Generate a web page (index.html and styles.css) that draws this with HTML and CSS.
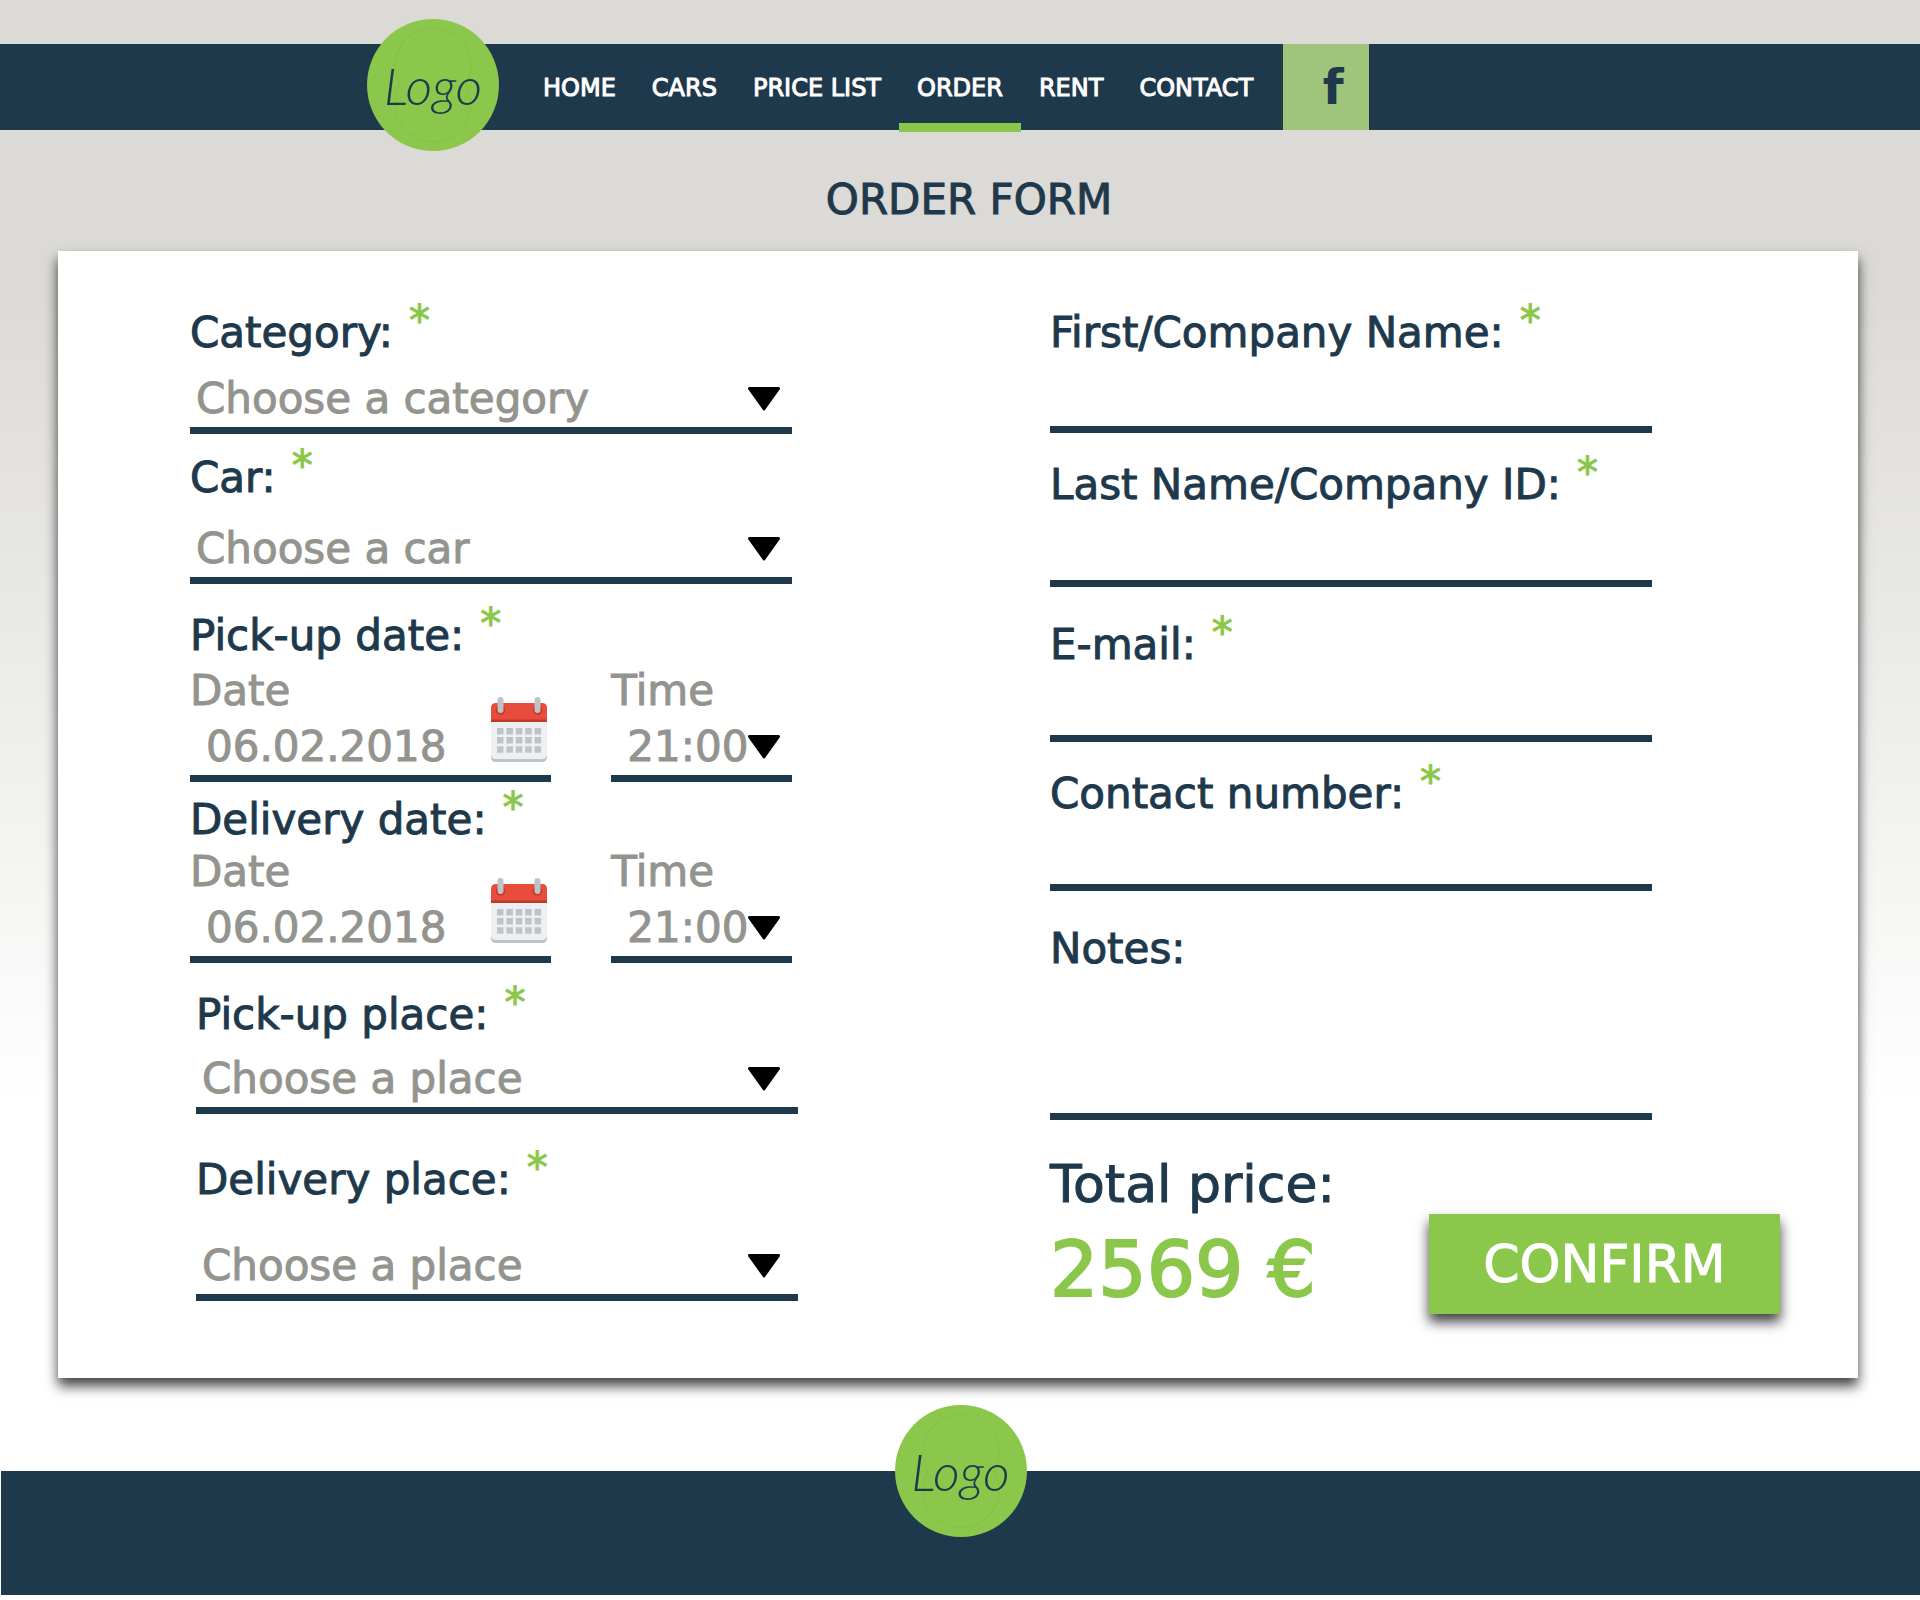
FILE: index.html
```html
<!DOCTYPE html>
<html lang="en">
<head>
<meta charset="utf-8">
<meta name="viewport" content="width=device-width, initial-scale=1">
<title>Order form</title>
<link rel="stylesheet" href="styles.css">
</head>
<body>
<svg class="sprite" aria-hidden="true">
  <symbol id="arrow" viewBox="0 0 32 24"><path d="M1 0H31Q32 0 32 2L17 23Q16 24 15 23L0 2Q0 0 1 0Z"/></symbol>
  <symbol id="calendar" viewBox="0 0 56 65">
    <path fill="#bdc3c7" d="M0 24H56V60Q56 65 51 65H5Q0 65 0 60Z"/>
    <path fill="#ecf0f1" d="M0 24H56V57Q56 62 51 62H5Q0 62 0 57Z"/>
    <path fill="#e74c3c" d="M0 24V11Q0 6 5 6H51Q56 6 56 11V24Z"/>
    <path fill="#c0392b" d="M0 22.500H56V25H0Z"/>
    <circle fill="#c0392b" cx="9.500" cy="13" r="4.700"/>
    <circle fill="#c0392b" cx="46.500" cy="13" r="4.700"/>
    <rect fill="#bdc3c7" x="6.500" y="0" width="6" height="16" rx="3"/>
    <rect fill="#bdc3c7" x="43.500" y="0" width="6" height="16" rx="3"/>
    <path fill="#bdc3c7" d="M6 31h6.500v6.500H6zM15.400 31h6.500v6.500h-6.500zM24.800 31h6.500v6.500h-6.500zM34.200 31h6.500v6.500h-6.500zM43.600 31h6.500v6.500h-6.500zM6 40h6.500v6.500H6zM15.400 40h6.500v6.500h-6.500zM24.800 40h6.500v6.500h-6.500zM34.200 40h6.500v6.500h-6.500zM43.600 40h6.500v6.500h-6.500zM6 49.300h6.500v6.500H6zM15.400 49.300h6.500v6.500h-6.500zM24.800 49.300h6.500v6.500h-6.500zM34.200 49.300h6.500v6.500h-6.500zM43.600 49.300h6.500v6.500h-6.500z"/>
  </symbol>
  <symbol id="badge" viewBox="0 0 132 132">
    <circle cx="66" cy="66" r="66" fill="#8bc74a"/>
    <g fill="#85c04a"><circle cx="66" cy="47" r="38.500"/><circle cx="66" cy="85" r="38.500"/></g>
    <g fill="#8bc74a"><circle cx="66" cy="47" r="37.500"/><circle cx="66" cy="85" r="37.500"/></g>
  </symbol>
</svg>

<header class="bar">
  <a class="logo" href="#"><svg class="logo-badge" aria-hidden="true"><use href="#badge"/></svg><span class="logo-text">Logo</span></a>
  <nav>
    <ul class="menu">
      <li><a href="#">HOME</a></li>
      <li><a href="#">CARS</a></li>
      <li><a href="#">PRICE LIST</a></li>
      <li class="current"><a href="#" aria-current="page">ORDER</a></li>
      <li><a href="#">RENT</a></li>
      <li><a href="#">CONTACT</a></li>
    </ul>
  </nav>
  <a class="facebook" href="#">f</a>
</header>

<main>
  <h1>ORDER FORM</h1>
  <form class="card">
    <div class="column booking">
      <div class="field">
        <label for="category">Category:<span class="star">*</span></label>
        <div class="control">
          <select id="category"><option>Choose a category</option></select>
          <svg class="arrow" aria-hidden="true"><use href="#arrow"/></svg>
        </div>
      </div>
      <div class="field space-s">
        <label for="car">Car:<span class="star">*</span></label>
        <div class="control">
          <select id="car"><option>Choose a car</option></select>
          <svg class="arrow" aria-hidden="true"><use href="#arrow"/></svg>
        </div>
      </div>
      <div class="field space-m" role="group" aria-labelledby="pickup">
        <div class="label" id="pickup">Pick-up date:<span class="star">*</span></div>
        <div class="when">
          <div class="part">
            <label for="pickup-date">Date</label>
            <div class="control">
              <input class="value" id="pickup-date" type="text" value="06.02.2018">
              <button class="picker" type="button" aria-label="Open calendar"><svg aria-hidden="true"><use href="#calendar"/></svg></button>
            </div>
          </div>
          <div class="part">
            <label for="pickup-time">Time</label>
            <div class="control">
              <select class="value" id="pickup-time"><option>21:00</option></select>
              <svg class="arrow" aria-hidden="true"><use href="#arrow"/></svg>
            </div>
          </div>
        </div>
      </div>
      <div class="field space-xs" role="group" aria-labelledby="delivery">
        <div class="label" id="delivery">Delivery date:<span class="star">*</span></div>
        <div class="when">
          <div class="part">
            <label for="delivery-date">Date</label>
            <div class="control">
              <input class="value" id="delivery-date" type="text" value="06.02.2018">
              <button class="picker" type="button" aria-label="Open calendar"><svg aria-hidden="true"><use href="#calendar"/></svg></button>
            </div>
          </div>
          <div class="part">
            <label for="delivery-time">Time</label>
            <div class="control">
              <select class="value" id="delivery-time"><option>21:00</option></select>
              <svg class="arrow" aria-hidden="true"><use href="#arrow"/></svg>
            </div>
          </div>
        </div>
      </div>
      <div class="field place space-m">
        <label for="pickup-place">Pick-up place:<span class="star">*</span></label>
        <div class="control">
          <select id="pickup-place"><option>Choose a place</option></select>
          <svg class="arrow" aria-hidden="true"><use href="#arrow"/></svg>
        </div>
      </div>
      <div class="field place space-xl">
        <label for="delivery-place">Delivery place:<span class="star">*</span></label>
        <div class="control">
          <select id="delivery-place"><option>Choose a place</option></select>
          <svg class="arrow" aria-hidden="true"><use href="#arrow"/></svg>
        </div>
      </div>
    </div>

    <div class="column customer">
      <div class="field">
        <label for="first-name">First/Company Name:<span class="star">*</span></label>
        <div class="control"><input id="first-name" type="text"></div>
      </div>
      <div class="field space-m">
        <label for="last-name">Last Name/Company ID:<span class="star">*</span></label>
        <div class="control"><input id="last-name" type="text"></div>
      </div>
      <div class="field space-l">
        <label for="email">E-mail:<span class="star">*</span></label>
        <div class="control"><input id="email" type="email"></div>
      </div>
      <div class="field space-m">
        <label for="phone">Contact number:<span class="star">*</span></label>
        <div class="control"><input id="phone" type="tel"></div>
      </div>
      <div class="field space-l">
        <label for="notes">Notes:</label>
        <div class="control"><textarea id="notes" rows="2"></textarea></div>
      </div>
      <div class="checkout">
        <div class="total">
          <div class="total-label">Total price:</div>
          <output class="price">2569 €</output>
        </div>
        <button class="confirm" type="submit">CONFIRM</button>
      </div>
    </div>
  </form>
</main>

<footer class="footer">
  <a class="logo" href="#"><svg class="logo-badge" aria-hidden="true"><use href="#badge"/></svg><span class="logo-text">Logo</span></a>
</footer>
</body>
</html>
```
FILE: styles.css
```css
:root {
  --navy: #1f394c;
  --green: #8bc74a;
  --grey: #94948f;
}

* { box-sizing: border-box; }

body {
  margin: 0;
  padding-top: 44px;
  font: 42px/48px "DejaVu Sans", sans-serif;
  -webkit-text-stroke: 1px;
  color: var(--navy);
  background: #fff linear-gradient(#dbdad6 280px, #fff 1100px) no-repeat;
}

a { color: inherit; text-decoration: none; }

.sprite { position: absolute; width: 0; height: 0; }

/* Header */
.bar {
  display: flex;
  align-items: center;
  height: 86px;
  padding-left: calc(50% - 593px);
  background: var(--navy);
}

.logo {
  display: grid;
  place-items: center;
  width: 132px;
  height: 132px;
  color: var(--navy);
}

.logo-badge, .logo-text { grid-area: 1 / 1; }
.logo-badge { width: 132px; height: 132px; }
.logo-text {
  font: italic 300 52px/60px Lato, sans-serif;
  -webkit-text-stroke: 0;
}

.bar .logo { margin: -26px 26px -22px 0; }

.menu {
  display: flex;
  margin: 0;
  padding: 0;
  list-style: none;
  font-size: 24px;
  color: #fff;
  white-space: nowrap;
}

.menu li { position: relative; }
.menu a { display: block; padding: 2px 18px 0; line-height: 84px; }

.current::after {
  content: "";
  position: absolute;
  inset: auto 0 -2px;
  height: 9px;
  background: var(--green);
}

.facebook {
  width: 86px;
  margin-left: 12px;
  padding-left: 14px;
  font-size: 48px;
  font-weight: bold;
  line-height: 86px;
  text-align: center;
  background: #9fc47b;
  -webkit-text-stroke: 0;
}

/* Form */
h1 {
  margin: 0;
  padding: 46px 0 27px 18px;
  font-size: 42px;
  font-weight: normal;
  text-align: center;
}

.card {
  display: grid;
  grid-template-columns: 602fr 730fr;
  column-gap: 258px;
  margin: 0 62px 0 58px;
  padding: 58px 78px 64px 132px;
  background: #fff;
  box-shadow: 0 8px 12px rgba(0, 0, 0, .75);
}

.column { display: grid; align-content: start; }
.booking { grid-template-rows: 125px 150px 198px 181px 151px 187px; }
.customer { grid-template-rows: 124px 154px 155px 149px 229px; }
.customer .field { max-width: 602px; }

.field { display: flex; flex-direction: column; justify-content: space-between; }
.place { margin: 0 -6px 0 6px; }
.space-xs { padding-top: 14px; }
.space-s { padding-top: 20px; }
.space-m { padding-top: 28px; }
.space-l { padding-top: 34px; }
.space-xl { padding-top: 42px; }

label, .label { display: flex; gap: 16px; white-space: nowrap; }
.star { line-height: 24px; color: var(--green); }

.control { position: relative; display: flex; border-bottom: 7px solid var(--navy); }

input, select, textarea {
  appearance: none;
  width: 100%;
  margin: 0;
  padding: 0 0 4px 6px;
  border: 0;
  border-radius: 0;
  outline: 0;
  font: inherit;
  color: var(--grey);
  background: none;
  resize: none;
}

.value { padding-left: 16px; }

.arrow {
  position: absolute;
  right: 12px;
  bottom: 16px;
  width: 32px;
  height: 24px;
  pointer-events: none;
}

.place .arrow { right: 18px; }

.when {
  display: grid;
  grid-template-columns: 2fr 1fr;
  column-gap: 60px;
  color: var(--grey);
}

.part { display: grid; row-gap: 8px; }

.picker {
  position: absolute;
  right: 4px;
  bottom: 13px;
  width: 56px;
  height: 65px;
  padding: 0;
  border: 0;
  background: none;
}

.picker svg { display: block; width: 56px; height: 65px; }

.checkout {
  display: flex;
  justify-content: space-between;
  align-items: flex-end;
  padding-top: 34px;
}

.total { white-space: nowrap; }
.total-label { font-size: 52px; line-height: 60px; }
.price {
  display: block;
  margin-top: 12px;
  font-size: 76px;
  line-height: 88px;
  color: var(--green);
  -webkit-text-stroke: 2px;
}

.confirm {
  width: 351px;
  height: 100px;
  padding: 0;
  border: 0;
  font: inherit;
  font-size: 52px;
  color: #fff;
  background: var(--green);
  box-shadow: 0 8px 12px rgba(0, 0, 0, .75);
}

/* Footer */
.footer {
  display: flex;
  justify-content: center;
  height: 124px;
  margin: 93px 0 6px 1px;
  background: var(--navy);
}

.footer .logo { margin-top: -66px; }
```
